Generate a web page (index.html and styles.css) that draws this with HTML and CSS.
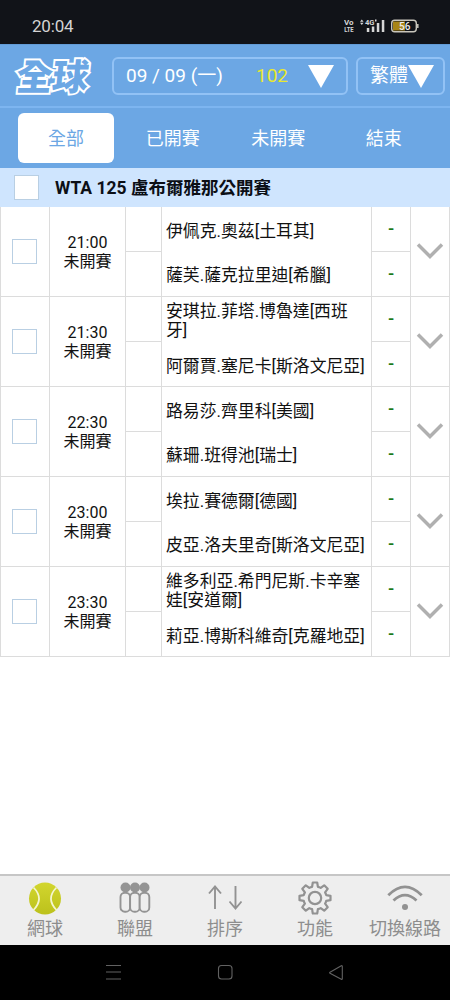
FILE: index.html
```
<!DOCTYPE html>
<html lang="zh-Hant">
<head>
<meta charset="utf-8">
<meta name="viewport" content="width=device-width, initial-scale=1">
<title>全球</title>
<link rel="stylesheet" href="styles.css">
</head>
<body>
<div class="status">
  <span class="clock">20:04</span>
  <svg class="signal" width="76" height="16" viewBox="0 0 76 16">
    <g fill="#d6d6d6" font-family="Roboto, sans-serif" font-weight="700">
      <text x="0" y="7" font-size="8" textLength="9.500" lengthAdjust="spacingAndGlyphs">Vo</text>
      <text x="0.200" y="14.200" font-size="8" textLength="9.500" lengthAdjust="spacingAndGlyphs">LTE</text>
      <text x="21" y="7" font-size="8" textLength="9.500" lengthAdjust="spacingAndGlyphs">4G</text>
      <path d="M16 3.700l1.800-2.200 1.800 2.200zM16 4.700l1.800 2.200 1.800-2.200zM31 1.500h1.500v2H31z"/>
      <path d="M22.800 10h2.500v4h-2.500zM27.800 8.500h2.500V14h-2.500zM32.800 5h2.500v9h-2.500zM37.800 2h2.500v12h-2.500z"/>
    </g>
    <rect x="47.700" y="2.200" width="24.600" height="11.600" rx="3" fill="#111318" stroke="#c9c6bc" stroke-width="1.400"/>
    <path d="M49 3.500h12v9H49z" fill="#a98516"/>
    <path d="M73.800 6v4" stroke="#c9c6bc" stroke-width="1.500"/>
    <text x="60.700" y="11.700" font-size="10" font-weight="500" font-family="Roboto, sans-serif" fill="#eee" text-anchor="middle">56</text>
  </svg>
</div>
<header class="top">
  <div class="logo">全球</div>
  <div class="select date"><span>09 / 09 (一)</span><span class="count">102</span><i class="tri"></i></div>
  <div class="select lang"><span>繁體</span><i class="tri"></i></div>
</header>
<nav class="tabs">
  <span class="tab active">全部</span><span class="tab">已開賽</span><span class="tab">未開賽</span><span class="tab">結束</span>
</nav>
<div class="league"><span class="box"></span><h1>WTA 125 盧布爾雅那公開賽</h1></div>
<main>
  <section class="match">
    <div class="pick"><span class="box"></span></div>
    <div class="time">21:00<br>未開賽</div>
    <div class="half"><span></span><span></span></div>
    <div class="names"><p>伊佩克.奧茲[土耳其]</p><p>薩芙.薩克拉里迪[希臘]</p></div>
    <div class="half score"><span>-</span><span>-</span></div>
    <div class="more"><svg width="28" height="18" viewBox="0 0 28 18"><path d="M2 2.500L14 14.500L26 2.500"/></svg></div>
  </section>
  <section class="match">
    <div class="pick"><span class="box"></span></div>
    <div class="time">21:30<br>未開賽</div>
    <div class="half"><span></span><span></span></div>
    <div class="names wrapped"><p>安琪拉.菲塔.博魯達[西班<br>牙]</p><p>阿爾賈.塞尼卡[斯洛文尼亞]</p></div>
    <div class="half score"><span>-</span><span>-</span></div>
    <div class="more"><svg width="28" height="18" viewBox="0 0 28 18"><path d="M2 2.500L14 14.500L26 2.500"/></svg></div>
  </section>
  <section class="match">
    <div class="pick"><span class="box"></span></div>
    <div class="time">22:30<br>未開賽</div>
    <div class="half"><span></span><span></span></div>
    <div class="names"><p>路易莎.齊里科[美國]</p><p>蘇珊.班得池[瑞士]</p></div>
    <div class="half score"><span>-</span><span>-</span></div>
    <div class="more"><svg width="28" height="18" viewBox="0 0 28 18"><path d="M2 2.500L14 14.500L26 2.500"/></svg></div>
  </section>
  <section class="match">
    <div class="pick"><span class="box"></span></div>
    <div class="time">23:00<br>未開賽</div>
    <div class="half"><span></span><span></span></div>
    <div class="names"><p>埃拉.賽德爾[德國]</p><p>皮亞.洛夫里奇[斯洛文尼亞]</p></div>
    <div class="half score"><span>-</span><span>-</span></div>
    <div class="more"><svg width="28" height="18" viewBox="0 0 28 18"><path d="M2 2.500L14 14.500L26 2.500"/></svg></div>
  </section>
  <section class="match">
    <div class="pick"><span class="box"></span></div>
    <div class="time">23:30<br>未開賽</div>
    <div class="half"><span></span><span></span></div>
    <div class="names wrapped"><p>維多利亞.希門尼斯.卡辛塞<br>娃[安道爾]</p><p>莉亞.博斯科維奇[克羅地亞]</p></div>
    <div class="half score"><span>-</span><span>-</span></div>
    <div class="more"><svg width="28" height="18" viewBox="0 0 28 18"><path d="M2 2.500L14 14.500L26 2.500"/></svg></div>
  </section>
</main>
<footer class="menu">
  <div class="item">
    <svg width="36" height="36" viewBox="0 0 36 36"><defs><linearGradient id="ball" x1="0" y1="0" x2="0" y2="1"><stop offset="0" stop-color="#d2d62e"/><stop offset="1" stop-color="#bcc11c"/></linearGradient></defs><circle cx="18" cy="18.500" r="16" fill="url(#ball)"/><path d="M6.500 7.500q11 11 0 22.500M29.500 7.500q-11 11 0 22.500" fill="none" stroke="#f4f5d0" stroke-width="1.700"/></svg>
    <span>網球</span>
  </div>
  <div class="item">
    <svg width="36" height="36" viewBox="0 0 36 36"><g fill="#eee" stroke="#949494" stroke-width="1.900"><rect x="3.500" y="12.700" width="9.600" height="19" rx="4.300"/><rect x="13.100" y="12.700" width="9.600" height="19" rx="4.300"/><rect x="22.700" y="12.700" width="9.600" height="19" rx="4.300"/></g><g fill="#949494"><circle cx="8.500" cy="7.500" r="5"/><circle cx="18" cy="7.500" r="5"/><circle cx="27.500" cy="7.500" r="5"/></g></svg>
    <span>聯盟</span>
  </div>
  <div class="item">
    <svg width="36" height="36" viewBox="0 0 36 36"><path d="M8 29V7M2 13.500L8 6.500l6 7M28.500 6v22M22.500 21.500l6 7 6-7" fill="none" stroke="#929292" stroke-width="1.900"/></svg>
    <span>排序</span>
  </div>
  <div class="item">
    <svg width="36" height="36" viewBox="0 0 36 36"><path d="M15.800 2.500h4.400l.7 4.300q1.500.3 2.800 1.100l3.500-2.600 3.500 3.500-2.600 3.500q.8 1.300 1.100 2.800l4.300.7v4.400l-4.300.7q-.3 1.500-1.100 2.800l2.600 3.500-3.500 3.500-3.500-2.600q-1.300.8-2.800 1.100l-.7 4.300h-4.400l-.7-4.300q-1.500-.3-2.800-1.100l-3.500 2.600-3.500-3.500 2.600-3.500q-.8-1.300-1.100-2.800l-4.300-.7v-4.400l4.300-.7q.3-1.500 1.100-2.800L5.300 8.800l3.500-3.500 3.500 2.600q1.300-.8 2.800-1.100z" fill="none" stroke="#929292" stroke-width="2.200" stroke-linejoin="round"/><circle cx="18" cy="18" r="6.200" fill="none" stroke="#929292" stroke-width="2.200"/></svg>
    <span>功能</span>
  </div>
  <div class="item">
    <svg width="36" height="36" viewBox="0 0 36 36"><path d="M1.300 15.200q16.700-16.800 33.400 0M6.500 20.600q11.500-11 23 0" fill="none" stroke="#929292" stroke-width="2.800"/><circle cx="18" cy="27" r="3" fill="#929292"/></svg>
    <span>切換線路</span>
  </div>
</footer>
<div class="system">
  <svg width="18" height="18" viewBox="0 0 18 18"><path d="M1 2.500h15M1 9h15M1 16h15"/></svg>
  <svg width="18" height="18" viewBox="0 0 18 18"><rect x="2.500" y="2.500" width="13.500" height="13.500" rx="3"/></svg>
  <svg width="18" height="18" viewBox="0 0 18 18"><path d="M15.300 3.200v12.600q0 .9-1 .4L3 10.200q-.8-.5 0-1L14.300 2.800q1-.5 1 .4z"/></svg>
</div>
</body>
</html>
```
FILE: styles.css
```
* { box-sizing: border-box; }
body {
  margin: 0;
  width: 450px;
  height: 1000px;
  display: flex;
  flex-direction: column;
  overflow: hidden;
  background: #fff;
  color: #111;
  font-family: Roboto, "Noto Sans CJK TC", sans-serif;
}
svg { display: block; flex: none; }
.status {
  height: 44px;
  flex: none;
  display: flex;
  justify-content: space-between;
  padding: 17px 30px 0 32px;
  background: #111318;
  color: #d4d4d4;
}
.clock { font-size: 17px; line-height: 19px; letter-spacing: -0.2px; }
.signal { margin-top: 1px; }
.top {
  height: 64px;
  flex: none;
  display: flex;
  align-items: flex-start;
  padding: 12px 5px 0 17px;
  background: #6ca7e4;
  border-top: 1px solid #629bd6;
  border-bottom: 2px solid #7db5f0;
}
.logo {
  width: 80px;
  margin-right: 15px;
  font: 900 36px/34px "Noto Sans CJK TC", sans-serif;
  white-space: nowrap;
  color: #6ca7e4;
  -webkit-text-stroke: 4px #fff;
  paint-order: stroke fill;
  stroke-linejoin: round;
  transform: skewX(-6deg);
}
.select {
  height: 38px;
  display: flex;
  align-items: center;
  border: 2px solid #92c2f5;
  border-radius: 6px;
  color: #fff;
  font-size: 19px;
  line-height: 34px;
}
.date { width: 236px; padding-left: 12px; }
.date span:first-child { width: 130px; white-space: nowrap; }
.date .count { color: #e8e82e; width: 52px; }
.lang { width: 89px; margin-left: 8px; padding-left: 12px; }
.tri { border: 13px solid transparent; border-top: 23px solid #fff; border-bottom: 0; }
.tabs {
  height: 60px;
  flex: none;
  display: flex;
  align-items: center;
  padding: 0 13px 0 18px;
  background: #6ca7e4;
  color: #fff;
}
.tab { width: 105.500px; height: 50px; padding-top: 1px; font-size: 18px; line-height: 50px; text-align: center; }
.tab.active { width: 96px; margin-right: 6px; border-radius: 6px; background: #fff; color: #6ca7e4; }
.league {
  height: 39px;
  flex: none;
  display: flex;
  align-items: center;
  padding-left: 14px;
  background: #cfe5fe;
}
.league h1 { margin: 0 0 0 16px; font-size: 17.500px; line-height: 24px; font-weight: 700; color: #0c0f16; }
.box { width: 25px; height: 25px; background: #fff; border: 1px solid #b9cfe3; }
.match {
  height: 90px;
  display: grid;
  grid-template-columns: 50px 76px 36px 210px 39px 39px;
  grid-template-rows: 89px;
  border-bottom: 1px solid #dcdcdc;
}
.match > div { border-right: 1px solid #dcdcdc; }
.match > .pick { display: grid; place-items: center; padding: 0 1px 1px 0; border-left: 1px solid #dcdcdc; }
.time {
  display: flex;
  flex-direction: column;
  justify-content: center;
  font-size: 16px;
  line-height: 19px;
  text-align: center;
}
.half { display: grid; grid-template-rows: 45px 44px; }
.half span:first-child { border-bottom: 1px solid #dcdcdc; }
.score { color: #1a7a1a; text-align: center; font-size: 17px; font-weight: 600; line-height: 42px; }
.names { display: grid; grid-template-rows: 45px 42px; align-items: center; padding: 2px 0 0 4px; }
.names.wrapped { grid-template-rows: 44px 43px; }
.names p { margin: 0; font-size: 16.850px; line-height: 19px; white-space: nowrap; }
.wrapped p:last-child { padding-top: 3px; }
.more { display: grid; place-items: center; padding-bottom: 1px; }
.more path { fill: none; stroke: #b0b0b0; stroke-width: 3.500px; }
.menu {
  height: 71px;
  flex: none;
  margin-top: auto;
  display: grid;
  grid-template-columns: repeat(5, 90px);
  border-top: 2px solid #c6c6c6;
  background: #eee;
}
.item { display: flex; flex-direction: column; align-items: center; padding-top: 4px; }
.item span { font-size: 18px; line-height: 26px; color: #8d8d8d; white-space: nowrap; }
.system {
  height: 55px;
  flex: none;
  display: flex;
  justify-content: center;
  gap: 93px;
  padding-top: 18px;
  background: #000;
}
.system svg { fill: none; stroke: #626262; stroke-width: 1.100px; }
```
